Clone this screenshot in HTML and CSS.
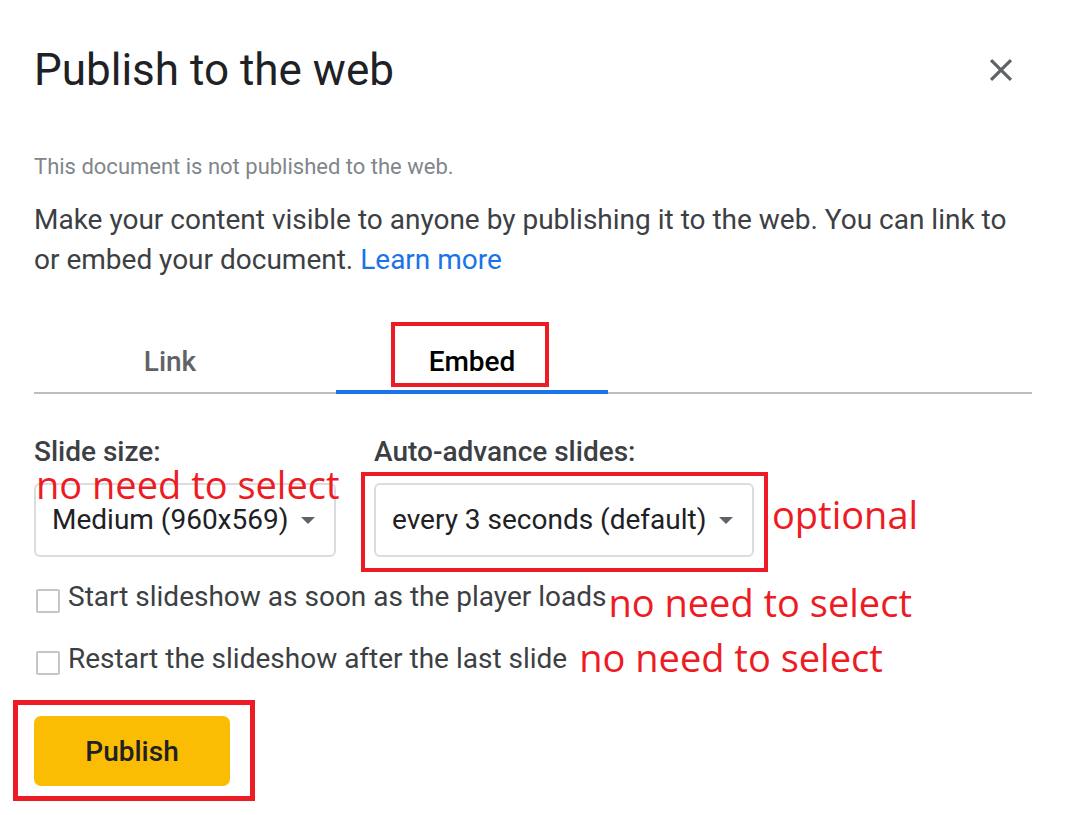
FILE: index.html
```html
<!DOCTYPE html>
<html lang="en">
<head>
  <meta charset="UTF-8" />
  <meta name="viewport" content="width=device-width, initial-scale=1.0"/>
  <title>Publish to the web</title>
  <link rel="stylesheet" href="styles.css">
</head>
<body>

<div class="dialog">
  <div class="dialog-head">
    <h1>Publish to the web</h1>
    <button class="close-btn" aria-label="Close">
      <svg viewBox="0 0 24 24" width="38" height="38">
        <path d="M19 6.41L17.59 5 12 10.59 6.41 5 5 6.41 10.59 12 5 17.59 6.41 19 12 13.41 17.59 19 19 17.59 13.41 12z" fill="#5f6368"/>
      </svg>
    </button>
  </div>

  <p class="status">This document is not published to the web.</p>
  <p class="intro">Make your content visible to anyone by publishing it to the web. You can link to<br>or embed your document. <a href="#">Learn more</a></p>

  <div class="tabs">
    <div class="tab">Link</div>
    <div class="tab active">Embed<span class="mark mark-embed"></span></div>
  </div>

  <div class="options">
    <div class="field">
      <label>Slide size:</label>
      <div class="select select-size">
        <span>Medium (960x569)</span>
        <span class="caret"></span>
        <span class="note note-over">no need to select</span>
      </div>
    </div>
    <div class="field">
      <label>Auto-advance slides:</label>
      <div class="field-row">
        <div class="select select-advance">
          <span>every 3 seconds (default)</span>
          <span class="caret"></span>
          <span class="mark mark-select"></span>
        </div>
        <span class="note note-optional">optional</span>
      </div>
    </div>
  </div>

  <div class="check-row">
    <span class="checkbox"></span>
    <span class="check-label">Start slideshow as soon as the player loads</span>
    <span class="note note-check1">no need to select</span>
  </div>
  <div class="check-row">
    <span class="checkbox"></span>
    <span class="check-label">Restart the slideshow after the last slide</span>
    <span class="note note-check2">no need to select</span>
  </div>

  <div class="actions">
    <div class="publish-wrap">
      <button class="publish-btn">Publish</button>
      <span class="mark mark-publish"></span>
    </div>
  </div>
</div>

</body>
</html>
```

FILE: styles.css
```css
body {
  font-family: Roboto, 'Liberation Sans', sans-serif;
  background: #ffffff;
  margin: 0;
  padding: 0;
}

.dialog {
  padding: 42px 33px 29px 34px;
}

.dialog-head {
  display: flex;
  justify-content: space-between;
  align-items: center;
}

.dialog-head h1 {
  margin: 0;
  font-size: 44px;
  font-weight: 400;
  line-height: 56px;
  color: #202124;
}

.close-btn {
  display: flex;
  padding: 0;
  margin-right: 12px;
  border: none;
  background: none;
  cursor: pointer;
}

.status {
  margin: 54px 0 0;
  font-size: 22px;
  line-height: 30px;
  color: #80868b;
}

.intro {
  margin: 18px 0 0;
  font-size: 28px;
  line-height: 40px;
  color: #3c4043;
}

.intro a {
  color: #1a73e8;
  text-decoration: none;
}

.tabs {
  display: flex;
  gap: 30px;
  margin-top: 62px;
  border-bottom: 2px solid #bdbdbd;
}

.tab {
  position: relative;
  width: 272px;
  padding-bottom: 8px;
  margin-bottom: -2px;
  border-bottom: 4px solid transparent;
  text-align: center;
  font-size: 28px;
  font-weight: 500;
  line-height: 40px;
  color: #5f6368;
}

.tab.active {
  color: #000;
  border-bottom-color: #1a73e8;
}

.options {
  display: flex;
  gap: 38px;
  margin-top: 40px;
}

.field label {
  display: block;
  margin-bottom: 13px;
  font-size: 28px;
  font-weight: 500;
  line-height: 36px;
  color: #3c4043;
}

.field-row {
  display: flex;
  align-items: baseline;
}

.select {
  position: relative;
  display: flex;
  align-items: center;
  box-sizing: border-box;
  height: 74px;
  padding: 0 19px 0 16px;
  border: 2px solid #dadce0;
  border-radius: 6px;
  font-size: 28px;
  line-height: 36px;
  color: #202124;
}

.select-size {
  width: 302px;
}

.select-advance {
  width: 380px;
}

.caret {
  margin-left: auto;
  width: 0;
  height: 0;
  border-left: 7px solid transparent;
  border-right: 7px solid transparent;
  border-top: 7px solid #5f6368;
}

.check-row {
  display: flex;
  align-items: flex-start;
  margin-top: 22px;
}

.check-row + .check-row {
  margin-top: 20px;
}

.checkbox {
  box-sizing: border-box;
  width: 24px;
  height: 24px;
  margin: 10px 0 0 2px;
  border: 2px solid #c6c6c6;
  border-radius: 2px;
}

.check-label {
  margin-left: 8px;
  font-size: 28px;
  line-height: 36px;
  color: #3c4043;
}

.actions {
  margin-top: 39px;
}

.publish-wrap {
  position: relative;
  display: inline-block;
}

.publish-btn {
  display: block;
  width: 196px;
  height: 70px;
  border: none;
  border-radius: 7px;
  background-color: #fbbc04;
  font-family: Roboto, 'Liberation Sans', sans-serif;
  font-size: 28px;
  font-weight: 500;
  color: #202124;
  cursor: pointer;
}

/* red review annotations drawn over the dialog */
.note {
  font-family: 'Open Sans', 'Noto Sans', sans-serif;
  font-size: 38px;
  line-height: 38px;
  color: #ed1c24;
  white-space: nowrap;
}

.note-over {
  position: absolute;
  left: 0;
  top: -14px;
  line-height: 26px;
}

.note-optional {
  margin-left: 18px;
}

.note-check1 {
  margin: 4px 0 0 2px;
}

.note-check2 {
  margin: -3px 0 0 12px;
}

.mark {
  position: absolute;
  border: 4px solid #ed1c24;
  pointer-events: none;
}

.mark-embed {
  left: 55px;
  right: 59px;
  top: -20px;
  bottom: 3px;
}

.mark-select {
  left: -15px;
  right: -16px;
  top: -13px;
  bottom: -17px;
}

.mark-publish {
  left: -21px;
  right: -25px;
  top: -16px;
  bottom: -15px;
  border-width: 5px;
}
```
